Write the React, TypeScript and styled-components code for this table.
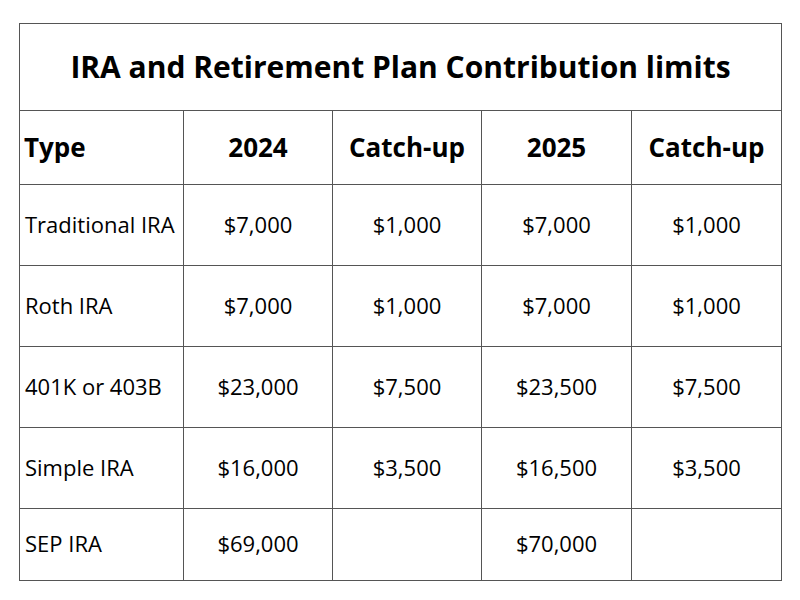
import React from "react";
import styled, { createGlobalStyle } from "styled-components";

const Global = createGlobalStyle`
  html, body { margin: 0; padding: 0; background: #ffffff; }
  body { font-family: "Open Sans", "Liberation Sans", sans-serif; color: #000; }
`;

const Page = styled.div`
  width: 800px;
  height: 600px;
  padding: 23px 0 0 19px;
  box-sizing: border-box;
`;

const Table = styled.table`
  border-collapse: collapse;
  width: 762px;
  table-layout: fixed;
  border: 1px solid #8a8a8a;
`;

const Col = styled.col<{ $w: number }>`
  width: ${(p) => p.$w}px;
`;

const TitleCell = styled.th`
  height: 84px;
  font-size: 30px;
  font-weight: 700;
  text-align: center;
  border: 1px solid #555;
  padding: 0 0 2px 0;
`;

const HeadCell = styled.th<{ $left?: boolean }>`
  height: 71px;
  font-size: 26px;
  font-weight: 700;
  text-align: ${(p) => (p.$left ? "left" : "center")};
  padding: 0 0 2px ${(p) => (p.$left ? "4px" : "0")};
  border: 1px solid #555;
  white-space: nowrap;
`;

const Cell = styled.td<{ $left?: boolean; $last?: boolean }>`
  height: ${(p) => (p.$last ? 68 : 77)}px;
  font-size: 22px;
  font-weight: 400;
  text-align: ${(p) => (p.$left ? "left" : "center")};
  padding: 0 0 3px ${(p) => (p.$left ? "5px" : "0")};
  border: 1px solid #555;
  white-space: nowrap;
`;

const widths = [164, 149, 149, 150, 150];
const heads = ["Type", "2024", "Catch-up", "2025", "Catch-up"];

const rows: [string, string, string, string, string][] = [
  ["Traditional IRA", "$7,000", "$1,000", "$7,000", "$1,000"],
  ["Roth IRA", "$7,000", "$1,000", "$7,000", "$1,000"],
  ["401K or 403B", "$23,000", "$7,500", "$23,500", "$7,500"],
  ["Simple IRA", "$16,000", "$3,500", "$16,500", "$3,500"],
  ["SEP IRA", "$69,000", "", "$70,000", ""],
];

export default function App() {
  return (
    <Page>
      <Global />
      <Table>
        <colgroup>
          {widths.map((w, i) => (
            <Col key={i} $w={w} />
          ))}
        </colgroup>
        <thead>
          <tr>
            <TitleCell colSpan={5}>IRA and Retirement Plan Contribution limits</TitleCell>
          </tr>
          <tr>
            {heads.map((h, i) => (
              <HeadCell key={i} $left={i === 0}>
                {h}
              </HeadCell>
            ))}
          </tr>
        </thead>
        <tbody>
          {rows.map((r, i) => (
            <tr key={i}>
              {r.map((c, j) => (
                <Cell key={j} $left={j === 0} $last={i === rows.length - 1}>
                  {c}
                </Cell>
              ))}
            </tr>
          ))}
        </tbody>
      </Table>
    </Page>
  );
}
